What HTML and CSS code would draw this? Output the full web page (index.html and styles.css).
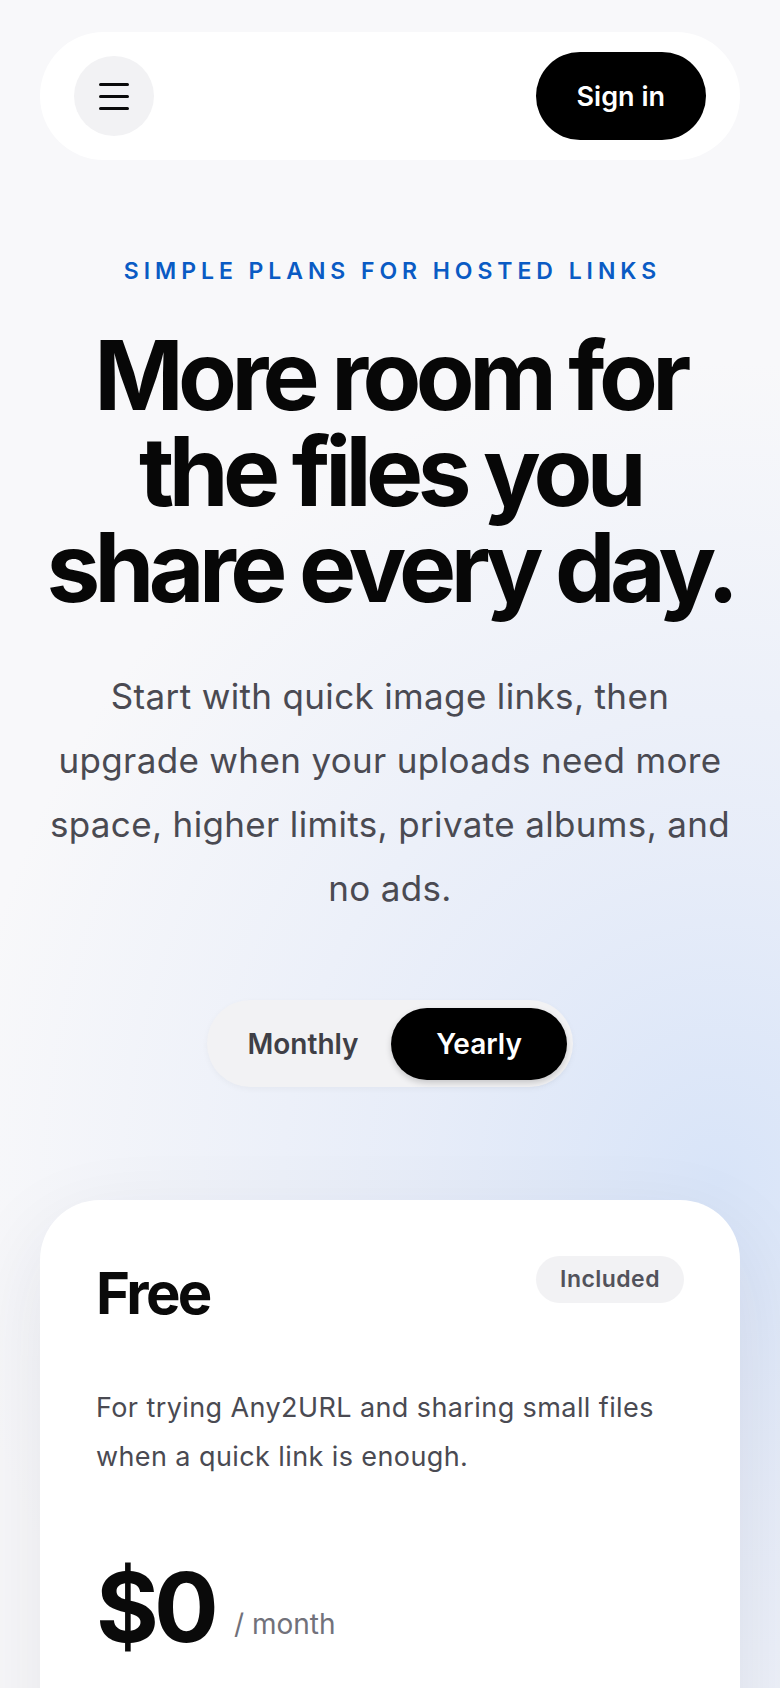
FILE: index.html
```html
<!DOCTYPE html>
<html lang="en">

<head>
  <meta charset="UTF-8">
  <meta name="viewport" content="width=device-width, initial-scale=1.0">
  <title>Pricing - Any2URL</title>
  <link rel="stylesheet" href="styles.css">
</head>

<body>
  <div class="page">
    <header class="topbar">
      <button class="menu-btn" aria-label="Open menu">
        <svg width="30" height="27" viewBox="0 0 30 27" fill="none">
          <path d="M1.5 1.5h27M1.5 13.5h27M1.5 25.5h27" stroke="#0a0a0a" stroke-width="3" stroke-linecap="round" />
        </svg>
      </button>
      <a href="#" class="signin-btn">Sign in</a>
    </header>

    <section class="hero">
      <p class="eyebrow">Simple plans for hosted links</p>
      <h1>More room for the files you share every day.</h1>
      <p class="lead">Start with quick image links, then upgrade when your uploads need more space, higher limits, private albums, and no ads.</p>

      <div class="billing-toggle">
        <button class="toggle-opt">Monthly</button>
        <button class="toggle-opt active">Yearly</button>
      </div>
    </section>

    <section class="plans">
      <article class="plan-card">
        <div class="plan-head">
          <h2>Free</h2>
          <span class="badge">Included</span>
        </div>
        <p class="plan-desc">For trying Any2URL and sharing small files when a quick link is enough.</p>
        <div class="price">
          <span class="amount">$0</span>
          <span class="period">/ month</span>
        </div>
      </article>
    </section>
  </div>
</body>

</html>
```

FILE: styles.css
```css
* {
  margin: 0;
  padding: 0;
  box-sizing: border-box;
}

html,
body {
  height: 100%;
}

body {
  font-family: 'Inter', 'Noto Sans', sans-serif;
  color: #0a0a0a;
  background-color: #f8f8fa;
  background-image:
    radial-gradient(ellipse 760px 820px at 92% 70%, rgba(216, 228, 248, 1) 0%, rgba(224, 232, 248, 0.7) 40%, rgba(248, 248, 250, 0) 100%);
  overflow: hidden;
}

.page {
  height: 100vh;
  overflow: hidden;
  padding: 32px 40px 0;
}

.topbar {
  display: flex;
  align-items: center;
  justify-content: space-between;
  background: #fff;
  border-radius: 64px;
  padding: 20px 34px;
}

.menu-btn {
  width: 80px;
  height: 80px;
  border: none;
  border-radius: 50%;
  background: #f2f2f4;
  display: flex;
  align-items: center;
  justify-content: center;
  cursor: pointer;
}

.signin-btn {
  display: flex;
  align-items: center;
  height: 88px;
  padding: 0 41px;
  border-radius: 44px;
  background: #000;
  color: #fff;
  text-decoration: none;
  font-size: 27px;
  font-weight: 600;
}

.hero {
  text-align: center;
  display: flex;
  flex-direction: column;
  align-items: center;
}

.eyebrow {
  margin-top: 95px;
  font-size: 23px;
  line-height: 33px;
  font-weight: 600;
  letter-spacing: 0.215em;
  text-transform: uppercase;
  color: #0a5bc4;
  margin-right: -0.215em;
}

.hero h1 {
  margin-top: 39px;
  font-size: 96px;
  line-height: 96px;
  font-weight: 700;
  letter-spacing: -0.058em;
  color: #070707;
  margin-left: -20px;
  margin-right: -20px;
}

.lead {
  margin-top: 49px;
  max-width: 690px;
  font-size: 35px;
  line-height: 64px;
  letter-spacing: 0.01em;
  color: #4a4a52;
}

.billing-toggle {
  margin-top: 80px;
  display: grid;
  grid-template-columns: 176px 176px;
  padding: 8px 6px 7px 8px;
  background: #f2f2f4;
  border-radius: 44px;
  box-shadow: 0 2px 6px rgba(0, 0, 0, 0.04);
}

.toggle-opt {
  height: 72px;
  border: none;
  border-radius: 36px;
  background: transparent;
  font-family: inherit;
  font-size: 28px;
  font-weight: 600;
  color: #3f3f46;
  cursor: pointer;
}

.toggle-opt.active {
  background: #000;
  color: #fff;
  box-shadow: 0 3px 6px rgba(0, 0, 0, 0.18);
}

.plans {
  margin-top: 113px;
}

.plan-card {
  background: #fff;
  border-radius: 60px;
  padding: 56px;
  min-height: 600px;
  box-shadow: 0 30px 90px rgba(30, 35, 60, 0.09);
}

.plan-head {
  display: flex;
  align-items: flex-start;
  justify-content: space-between;
}

.plan-head h2 {
  margin-top: 2px;
  font-size: 58px;
  line-height: 70px;
  font-weight: 700;
  letter-spacing: -0.045em;
}

.badge {
  background: #f2f2f4;
  color: #52525b;
  font-size: 23px;
  font-weight: 600;
  line-height: 47px;
  letter-spacing: 0.02em;
  padding: 0 24px;
  border-radius: 24px;
}

.plan-desc {
  margin-top: 55px;
  font-size: 27px;
  line-height: 49px;
  letter-spacing: 0.015em;
  color: #4a4a52;
  max-width: 590px;
}

.price {
  margin-top: 78px;
  display: flex;
  align-items: flex-end;
  gap: 20px;
}

.amount {
  font-size: 96px;
  line-height: 96px;
  font-weight: 700;
  letter-spacing: -0.05em;
}

.period {
  font-size: 28px;
  line-height: 42px;
  color: #71717a;
  margin-bottom: 10px;
}
```
